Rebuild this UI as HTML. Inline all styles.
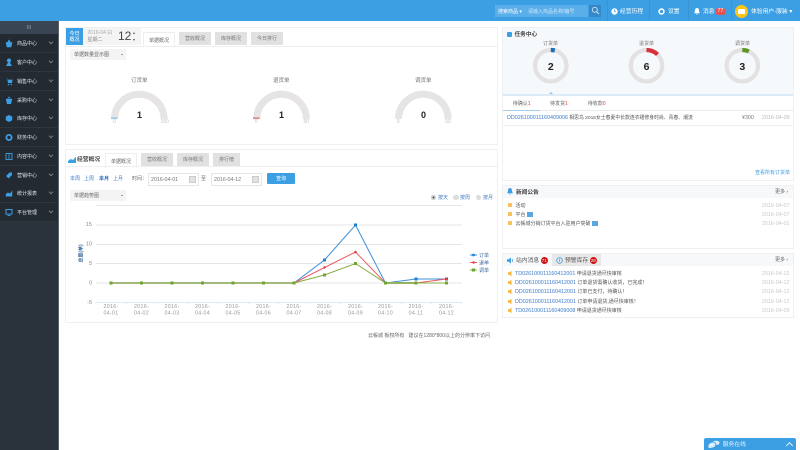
<!DOCTYPE html>
<html><head><meta charset="utf-8">
<style>
html,body{margin:0;padding:0;width:800px;height:450px;overflow:hidden;background:#fff}
body{font-family:"Liberation Sans","Noto Sans CJK SC",sans-serif;font-size:5px;color:#555;position:relative;filter:blur(.3px)}
.a{position:absolute;white-space:nowrap}
.panel{position:absolute;background:#fff;border:1px solid #eef0f2;box-sizing:border-box}
.side{position:absolute;left:0;top:21px;width:59px;height:429px;background:#2a323b;border-right:1px solid #59616a;box-sizing:border-box}
.mi{position:absolute;left:0;width:58px;height:19px;background:#232a31;border-bottom:1px solid #2d353e;box-sizing:border-box;color:#dfe3e8}
.mi span{position:absolute;left:17px;top:6px;font-size:5px;line-height:8px}
.mi svg{position:absolute;left:5px;top:5px}
.mi i{position:absolute;left:49px;top:6px;width:3px;height:3px;border-right:1px solid #8a929b;border-bottom:1px solid #8a929b;transform:rotate(45deg) scale(.8)}
.tab{position:absolute;height:13px;line-height:15px;text-align:center;background:#e1e1e1;color:#777;font-size:5px;width:32px}
.tab.on{background:#fff;border:1px solid #eceeef;border-bottom:0;height:15px;box-sizing:border-box;color:#666;line-height:16px}
.sel{position:absolute;background:#f4f4f4;height:11px;width:56px;line-height:12px;color:#666;padding-left:4px;box-sizing:border-box;font-size:5px}
.sel:after{content:"";position:absolute;right:3px;top:5px;border:1.2px solid transparent;border-top:1.6px solid #555}
.blue{color:#3d7cc9}.gr{color:#c4c4c4}.hd{font-weight:bold;color:#444}
.row{position:absolute;height:9px;line-height:9px;font-size:5px;color:#555;white-space:nowrap}
.row b{font-weight:normal;color:#3d7cc9;font-size:5.4px}
.row em{position:absolute;right:0;font-style:normal;color:#c8c8c8;font-size:5.4px}
.badge{display:inline-block;background:#cc1111;color:#fff;border-radius:50%;width:7px;height:7px;line-height:7px;text-align:center;font-size:4.5px;vertical-align:middle}
.c{text-align:center;width:16px;font-weight:bold;color:#222}
.pic{display:inline-block;width:6px;height:5px;background:#5aa7e0;vertical-align:middle;margin-left:1px}
</style></head><body>

<!-- top bar -->
<div class="a" style="left:0;top:0;width:800px;height:21px;background:#3d9fe3"></div>
<div class="a" style="left:495px;top:4.500px;width:93px;height:12.500px;background:#5aaeea"></div>
<div class="a" style="left:589px;top:4.500px;width:12px;height:12.500px;background:#3689c8"></div>
<div class="a" style="left:498px;top:7.500px;color:#fff;font-size:5px;line-height:8px">搜索商品 ▾</div>
<div class="a" style="left:528px;top:7.500px;color:#cfe6f8;font-size:5px;line-height:8px">请输入商品名称/编号</div>
<svg class="a" style="left:591px;top:6px" width="9" height="9" viewBox="0 0 9 9"><circle cx="3.800" cy="3.800" r="2.500" fill="none" stroke="#cfe6f8" stroke-width=".9"/><path d="M5.700 5.700L8 8" stroke="#cfe6f8" stroke-width="1"/></svg>
<div class="a" style="left:607px;top:0;width:1px;height:21px;background:#3a93d2"></div>
<div class="a" style="left:649px;top:0;width:1px;height:21px;background:#3a93d2"></div>
<div class="a" style="left:688px;top:0;width:1px;height:21px;background:#3a93d2"></div>
<div class="a" style="left:731px;top:0;width:1px;height:21px;background:#3a93d2"></div>
<svg class="a" style="left:611px;top:8px" width="7" height="7"><circle cx="3.500" cy="3.500" r="3.200" fill="#fff"/><path d="M3.500 1.500V3.500H5" stroke="#3d9fe3" stroke-width=".7" fill="none"/></svg>
<div class="a" style="left:620px;top:8px;color:#fff;font-size:5.800px;line-height:8px">经营历程</div>
<svg class="a" style="left:658px;top:8px" width="7" height="7"><circle cx="3.500" cy="3.500" r="2.400" fill="none" stroke="#fff" stroke-width="1.600"/></svg>
<div class="a" style="left:668px;top:8px;color:#fff;font-size:5.800px;line-height:8px">设置</div>
<svg class="a" style="left:694px;top:8px" width="6" height="7"><path d="M3 0C1.300 0 1 1.500 1 3L.2 5.300H5.800L5 3C5 1.500 4.700 0 3 0ZM2.200 5.800H3.800L3 7Z" fill="#fff"/></svg>
<div class="a" style="left:703px;top:8px;color:#fff;font-size:5.800px;line-height:8px">消息</div>
<div class="a" style="left:716px;top:8px;width:9px;height:7px;border-radius:2px;background:#e8524f;color:#fff;font-size:5.300px;line-height:7px;text-align:center">77</div>
<div class="a" style="left:735px;top:5px;width:13px;height:13px;border-radius:50%;background:#fbc717"></div>
<div class="a" style="left:738px;top:9px;width:7px;height:5px;background:#fff;border-radius:1px"></div>
<div class="a" style="left:751px;top:8px;color:#fff;font-size:5.800px;line-height:8px">体验用户-服装 ▾</div>

<!-- sidebar -->
<div class="side"></div>
<div class="a" style="left:0;top:21px;width:58px;height:12.500px;background:#3a4554;color:#9aa4b0;text-align:center;font-size:5px;line-height:14px">III</div>
<div class="mi" style="top:33.500px"><svg width="8" height="9"><path d="M1 3.500H7L6 8H2ZM2.500 3.500L4 1L5.500 3.500" fill="#3d9fe3" stroke="#3d9fe3" stroke-width=".6"/></svg><span>商品中心</span><i></i></div>
<div class="mi" style="top:53px"><svg width="8" height="9"><circle cx="4" cy="2.500" r="2" fill="#3d9fe3"/><path d="M1 8L3 4.500H5L7 8Z" fill="#3d9fe3"/></svg><span>客户中心</span><i></i></div>
<div class="mi" style="top:72px"><svg width="8" height="9"><path d="M1 1.500H2.200L3 6H7L7.600 2.600H2.500" fill="#3d9fe3"/><circle cx="3.500" cy="7.500" r=".8" fill="#3d9fe3"/><circle cx="6.200" cy="7.500" r=".8" fill="#3d9fe3"/></svg><span>销售中心</span><i></i></div>
<div class="mi" style="top:90.500px"><svg width="8" height="9"><path d="M.8 3H7.200L6 8H2Z" fill="#3d9fe3"/><path d="M2.500 3L4 1L5.500 3" stroke="#3d9fe3" fill="none" stroke-width=".7"/></svg><span>采购中心</span><i></i></div>
<div class="mi" style="top:109px"><svg width="8" height="9"><path d="M4 1L7.200 2.600V6.300L4 8L.8 6.300V2.600Z" fill="#3d9fe3"/></svg><span>库存中心</span><i></i></div>
<div class="mi" style="top:128px"><svg width="8" height="9"><circle cx="4" cy="4.500" r="2.600" fill="none" stroke="#3d9fe3" stroke-width="1.800"/></svg><span>财务中心</span><i></i></div>
<div class="mi" style="top:147px"><svg width="8" height="9"><rect x="1" y="1.500" width="6" height="6" fill="none" stroke="#3d9fe3" stroke-width=".9"/><path d="M4 1.500V7.500" stroke="#3d9fe3" stroke-width=".8"/></svg><span>内容中心</span><i></i></div>
<div class="mi" style="top:165.500px"><svg width="8" height="9"><path d="M1 5L4.500 1.500H7V4L3.500 7.500Z" fill="#3d9fe3"/></svg><span>营销中心</span><i></i></div>
<div class="mi" style="top:184px"><svg width="8" height="9"><path d="M.8 7.500V5L3 3.500L5 4.500L7.200 1.500V7.500Z" fill="#3d9fe3"/></svg><span>统计报表</span><i></i></div>
<div class="mi" style="top:203px"><svg width="8" height="9"><rect x="1" y="1.500" width="6" height="4.600" fill="none" stroke="#3d9fe3" stroke-width="1"/><path d="M2.500 7.500H5.500" stroke="#3d9fe3" stroke-width=".9"/></svg><span>平台管理</span><i></i></div>

<!-- panel 1 -->
<div class="panel" style="left:65px;top:27px;width:433px;height:118px"></div>
<div class="a" style="left:66px;top:28px;width:17px;height:17px;background:#3d9fe3;color:#fff;font-size:5px;line-height:6.500px;text-align:center;padding-top:2.500px;box-sizing:border-box;white-space:normal">今日<br>概况</div>
<div class="a" style="left:83px;top:28px;width:58px;height:17px;background:#f4f4f4"></div>
<div class="a" style="left:87.500px;top:29.500px;font-size:5px;line-height:7px;color:#aaa">2016-04 曰</div>
<div class="a" style="left:87.500px;top:36.500px;font-size:5px;line-height:7px;color:#888">星期二</div>
<div class="a" style="left:118px;top:28.500px;font-size:12px;line-height:15px;color:#444">12</div>
<div class="a" style="left:133px;top:32px;border:1.500px solid transparent;border-bottom:2px solid #555;border-top:0"></div>
<div class="a" style="left:133px;top:39px;border:1.500px solid transparent;border-top:2px solid #555;border-bottom:0"></div>
<div class="tab on" style="left:143px;top:32px">单据概况</div>
<div class="tab" style="left:179px;top:32px">营收概况</div>
<div class="tab" style="left:215px;top:32px">库存概况</div>
<div class="tab" style="left:251px;top:32px">今日排行</div>
<div class="a" style="left:65px;top:46px;width:433px;height:1px;background:#eceeef"></div>
<div class="sel" style="left:70px;top:48.500px">单据数量显示图</div>

<div class="a" style="left:131px;top:76.500px;color:#777;font-size:5.500px;line-height:8px">订货单</div>
<div class="a" style="left:273px;top:76.500px;color:#777;font-size:5.500px;line-height:8px">退货单</div>
<div class="a" style="left:415px;top:76.500px;color:#777;font-size:5.500px;line-height:8px">调货单</div>
<svg class="a" style="left:100px;top:85px" width="380" height="45" viewBox="0 0 380 45">
<g fill="none" stroke="#e6e4e5" stroke-width="7">
<path d="M14.500 34A24.800 24.800 0 0 1 64.100 34"/><path d="M156.700 34A24.800 24.800 0 0 1 206.300 34"/><path d="M298.500 34A24.800 24.800 0 0 1 348.100 34"/>
</g>
<rect x="11" y="32.300" width="6.500" height="1.800" fill="#9fcbe8"/>
<rect x="153" y="32.300" width="6.500" height="1.800" fill="#e08a90"/>
</svg>
<div class="a c" style="left:131.500px;top:109.500px;font-size:9px;line-height:10px">1</div>
<div class="a c" style="left:273.500px;top:109.500px;font-size:9px;line-height:10px">1</div>
<div class="a c" style="left:415.500px;top:109.500px;font-size:9px;line-height:10px">0</div>
<div class="a gr" style="left:113px;top:119px;font-size:5px;line-height:7px">0</div>
<div class="a gr" style="left:160.500px;top:119px;font-size:5px;line-height:7px">100</div>
<div class="a gr" style="left:254.700px;top:119px;font-size:5px;line-height:7px">0</div>
<div class="a gr" style="left:303.500px;top:119px;font-size:5px;line-height:7px">50</div>
<div class="a gr" style="left:396.700px;top:119px;font-size:5px;line-height:7px">0</div>
<div class="a gr" style="left:445.200px;top:119px;font-size:5px;line-height:7px">50</div>

<!-- panel 2 -->
<div class="panel" style="left:65px;top:148.500px;width:433px;height:174px"></div>
<svg class="a" style="left:68px;top:156px" width="8" height="7"><path d="M0 7V5L2.500 3L5 4L8 .5V7Z" fill="#3d9fe3"/></svg>
<div class="a hd" style="left:77px;top:156px;font-size:5.800px;line-height:9px">经营概况</div>
<div class="tab on" style="left:105px;top:153px">单据概况</div>
<div class="tab" style="left:141px;top:153px">营收概况</div>
<div class="tab" style="left:177px;top:153px">库存概况</div>
<div class="tab" style="left:213px;top:153px;width:27px">排行榜</div>
<div class="a" style="left:65px;top:166px;width:433px;height:1px;background:#eceeef"></div>
<div class="a blue" style="left:70px;top:175px;line-height:8px">本周</div>
<div class="a blue" style="left:84px;top:175px;line-height:8px">上周</div>
<div class="a" style="left:99px;top:175px;line-height:8px;color:#2a6cbf;font-weight:bold">本月</div>
<div class="a blue" style="left:113px;top:175px;line-height:8px">上月</div>
<div class="a" style="left:132px;top:175px;line-height:8px;color:#666">时间：</div>
<div class="a" style="left:148px;top:172.500px;width:50.500px;height:13px;border:1px solid #e6e6e6;box-sizing:border-box;line-height:12px;padding-left:2px;color:#777;font-size:5.300px">2016-04-01</div>
<div class="a" style="left:201px;top:175px;line-height:8px;color:#666">至</div>
<div class="a" style="left:211px;top:172.500px;width:50.500px;height:13px;border:1px solid #e6e6e6;box-sizing:border-box;line-height:12px;padding-left:2px;color:#777;font-size:5.300px">2016-04-12</div>
<div class="a" style="left:189px;top:175.500px;width:7px;height:7px;background:#dfe3e3;border:.5px solid #c8cccc;box-sizing:border-box"></div>
<div class="a" style="left:252px;top:175.500px;width:7px;height:7px;background:#dfe3e3;border:.5px solid #c8cccc;box-sizing:border-box"></div>
<div class="a" style="left:267px;top:172.800px;width:28px;height:11.700px;background:#3d9fe3;color:#fff;text-align:center;line-height:12px;border-radius:1px">查询</div>
<div class="sel" style="left:70px;top:190px">单据趋势图</div>

<div class="a" style="left:430.500px;top:194.500px;width:5.500px;height:5.500px;border-radius:50%;background:#ddd;box-shadow:inset 0 0 0 1.500px #ddd,inset 0 0 0 3px #444"></div>
<div class="a blue" style="left:438px;top:194.500px;line-height:7px">按天</div>
<div class="a" style="left:453px;top:194.500px;width:5.500px;height:5.500px;border-radius:50%;background:#ddd"></div>
<div class="a blue" style="left:460px;top:194.500px;line-height:7px">按周</div>
<div class="a" style="left:475.500px;top:194.500px;width:5.500px;height:5.500px;border-radius:50%;background:#ddd"></div>
<div class="a blue" style="left:483px;top:194.500px;line-height:7px">按月</div>

<svg class="a" style="left:60px;top:200px;overflow:visible" width="440" height="120" viewBox="60 200 440 120">
<g stroke="#e6e6e6" stroke-width="1">
<path d="M96 205.500H462M96 225H462M96 244.500H462M96 263.500H462M96 283H462"/>
</g>
<path d="M96 302.500H462" stroke="#d5e2f0" stroke-width=".8"/>
<g stroke="#d5e2f0" stroke-width=".6"><path d="M96 302.500v2M126.500 302.500v2M157 302.500v2M187.500 302.500v2M218 302.500v2M248.500 302.500v2M279 302.500v2M309.500 302.500v2M340 302.500v2M370.500 302.500v2M401 302.500v2M431.500 302.500v2M462 302.500v2"/></g>
<polyline fill="none" stroke="#3d8fd8" stroke-width="1" points="294,283 324.500,260 355.500,225 385.500,283 416,279 446.500,279"/>
<polyline fill="none" stroke="#ee5a66" stroke-width="1" points="294,283 324.500,267.500 355.500,252 385.500,283 416,283 446.500,279"/>
<path d="M111 283H294M385.500 283H416" fill="none" stroke="#a5b87c" stroke-width="2"/>
<polyline fill="none" stroke="#86ad44" stroke-width="1" points="294,283 324.500,275 355.500,263.500 385.500,283 416,283 446.500,283"/>
<g fill="#1f7fd0"><rect x="323" y="258.500" width="3" height="3"/><rect x="354" y="223.500" width="3" height="3"/><rect x="414.500" y="277.500" width="3" height="3"/><rect x="445" y="277.500" width="3" height="3"/></g>
<g fill="#e03b4a"><circle cx="324.500" cy="267.500" r="1.200"/><circle cx="355.500" cy="252" r="1.300"/><circle cx="446.500" cy="279" r="1.200"/></g>
<g fill="#6fa52c"><rect x="109.500" y="281.500" width="3" height="3"/><rect x="140" y="281.500" width="3" height="3"/><rect x="170.500" y="281.500" width="3" height="3"/><rect x="201" y="281.500" width="3" height="3"/><rect x="231.500" y="281.500" width="3" height="3"/><rect x="262" y="281.500" width="3" height="3"/><rect x="292.500" y="281.500" width="3" height="3"/><rect x="323" y="273.500" width="3" height="3"/><rect x="354" y="262" width="3" height="3"/><rect x="384" y="281.500" width="3" height="3"/><rect x="414.500" y="281.500" width="3" height="3"/><rect x="445" y="281.500" width="3" height="3"/></g>
<g fill="#888" font-size="5.500" text-anchor="end" font-family="Liberation Sans">
<text x="92" y="226">15</text><text x="92" y="245.500">10</text><text x="92" y="265">5</text><text x="92" y="284.500">0</text><text x="92" y="304">-5</text>
</g>
<text transform="translate(82.500,253.500) rotate(-90)" fill="#3f6a9c" font-size="5" font-weight="bold" font-family="Liberation Sans,Noto Sans CJK SC" text-anchor="middle">总量(单)</text>
<g fill="#999" font-size="5.300" text-anchor="middle" font-family="Liberation Sans" letter-spacing=".3">
<text x="111" y="308">2016-</text><text x="111" y="314.500">04-01</text>
<text x="141.500" y="308">2016-</text><text x="141.500" y="314.500">04-02</text>
<text x="172" y="308">2016-</text><text x="172" y="314.500">04-03</text>
<text x="202.500" y="308">2016-</text><text x="202.500" y="314.500">04-04</text>
<text x="233" y="308">2016-</text><text x="233" y="314.500">04-05</text>
<text x="263.500" y="308">2016-</text><text x="263.500" y="314.500">04-06</text>
<text x="294" y="308">2016-</text><text x="294" y="314.500">04-07</text>
<text x="324.500" y="308">2016-</text><text x="324.500" y="314.500">04-08</text>
<text x="355.500" y="308">2016-</text><text x="355.500" y="314.500">04-09</text>
<text x="385.500" y="308">2016-</text><text x="385.500" y="314.500">04-10</text>
<text x="416" y="308">2016-</text><text x="416" y="314.500">04-11</text>
<text x="446.500" y="308">2016-</text><text x="446.500" y="314.500">04-12</text>
</g>
<path d="M470 255H477" stroke="#3d8fd8" stroke-width="1"/><circle cx="473.500" cy="255" r="1.400" fill="#1f7fd0"/>
<path d="M470 262.500H477" stroke="#ee5a66" stroke-width="1"/><circle cx="473.500" cy="262.500" r="1.200" fill="#e03b4a"/>
<path d="M470 270H477" stroke="#86ad44" stroke-width="1"/><rect x="472" y="268.500" width="3" height="3" fill="#6fa52c"/>
<g fill="#3f6a9c" font-size="5" font-family="Liberation Sans,Noto Sans CJK SC"><text x="479" y="257">订单</text><text x="479" y="264.500">退单</text><text x="479" y="272">调单</text></g>
</svg>

<div class="a" style="left:368px;top:332px;font-size:5px;line-height:9px;color:#666">云帳城 板权所有&nbsp;&nbsp;&nbsp;建议在1280*800以上的分辨率下访问</div>

<!-- task center -->
<div class="panel" style="left:502px;top:27px;width:292px;height:153.500px"></div>
<div class="a" style="left:503px;top:28px;width:290px;height:67px;background:#f6f9fc"></div>
<div class="a" style="left:503px;top:94px;width:290px;height:2px;background:#dcebf6"></div>
<div class="a" style="left:548.500px;top:92px;border:2.500px solid transparent;border-bottom:2.500px solid #8fc3e8;border-top:0"></div>
<div class="a" style="left:507px;top:31.500px;width:5px;height:5px;background:#3d9fe3;border-radius:1px"></div>
<div class="a hd" style="left:514.500px;top:30.500px;font-size:5.700px;line-height:8px">任务中心</div>
<div class="a" style="left:543px;top:40.500px;font-size:5px;line-height:7px;color:#777">订货单</div>
<div class="a" style="left:639px;top:40.500px;font-size:5px;line-height:7px;color:#777">退货单</div>
<div class="a" style="left:735px;top:40.500px;font-size:5px;line-height:7px;color:#777">调货单</div>
<svg class="a" style="left:530px;top:45px" width="240" height="40" viewBox="0 0 240 40">
<g fill="none" stroke="#e3e1e1" stroke-width="4.300">
<circle cx="20.800" cy="20.700" r="15.700"/><circle cx="116.500" cy="20.700" r="15.700"/><circle cx="212.300" cy="20.700" r="15.700"/>
</g>
<path d="M20.800 5A15.700 15.700 0 0 1 24.800 5.500" fill="none" stroke="#1a6cb8" stroke-width="4.300"/>
<path d="M116.500 5A15.700 15.700 0 0 1 127.500 9.500" fill="none" stroke="#d92f3c" stroke-width="4.300"/>
<path d="M212.300 5A15.700 15.700 0 0 1 218.800 6.400" fill="none" stroke="#5f9424" stroke-width="4.300"/>
</svg>
<div class="a c" style="left:542.800px;top:60.500px;font-size:10.500px;line-height:12px">2</div>
<div class="a c" style="left:638.500px;top:60.500px;font-size:10.500px;line-height:12px">6</div>
<div class="a c" style="left:734.300px;top:60.500px;font-size:10.500px;line-height:12px">3</div>

<div class="a" style="left:512.700px;top:100px;font-size:5px;line-height:9px;color:#666">待确认<span style="color:#e33">1</span></div>
<div class="a" style="left:550px;top:100px;font-size:5px;line-height:9px;color:#666">待发货<span style="color:#e33">1</span></div>
<div class="a" style="left:587.700px;top:100px;font-size:5px;line-height:9px;color:#666">待收款<span style="color:#e33">0</span></div>
<div class="a" style="left:503px;top:110px;width:290px;height:1px;background:#e8eaec"></div>
<div class="a" style="left:503px;top:109.500px;width:37px;height:1.500px;background:#a5cfee"></div>
<div class="a" style="left:507px;top:114px;font-size:4.850px;line-height:9px;color:#555"><span class="blue" style="font-size:5.400px">DD026100011160409006</span> 相思鸟 2016女士春夏中长款连衣裙修身时尚、青春、潮流</div>
<div class="a" style="left:742px;top:114px;font-size:5.300px;line-height:9px;color:#777">¥300</div>
<div class="a" style="left:762px;top:114px;font-size:5.400px;line-height:9px;color:#bbb">2016-04-09</div>
<div class="a" style="left:503px;top:125px;width:290px;height:1px;background:#f0f0f0"></div>
<div class="a" style="left:755px;top:169px;font-size:5px;line-height:9px;color:#3d9fe3">查看所有订货单</div>

<!-- news -->
<div class="panel" style="left:502px;top:185px;width:292px;height:63.500px"></div>
<div class="a" style="left:503px;top:186px;width:290px;height:12px;background:#f6f8fa"></div>
<svg class="a" style="left:507px;top:188px" width="6" height="7"><path d="M3 0C1.300 0 1 1.500 1 3L.2 5.300H5.800L5 3C5 1.500 4.700 0 3 0ZM2.200 5.800H3.800L3 7Z" fill="#3d9fe3"/></svg>
<div class="a hd" style="left:516px;top:188.500px;font-size:5.700px;line-height:8px">新闻公告</div>
<div class="a" style="left:775px;top:189px;font-size:5px;line-height:7px;color:#666">更多 ›</div>
<div class="a" style="left:508px;top:203px;width:4px;height:4px;background:#f8c25c"></div>
<div class="a" style="left:508px;top:212px;width:4px;height:4px;background:#f8c25c"></div>
<div class="a" style="left:508px;top:221px;width:4px;height:4px;background:#f8c25c"></div>
<div class="row" style="left:515.500px;width:274px;top:202px">活动<em>2016-04-07</em></div>
<div class="row" style="left:515.500px;width:274px;top:211px">平台<span class="pic"></span><em>2016-04-07</em></div>
<div class="row" style="left:515.500px;width:274px;top:220px">云帳城分销订货平台入驻用户突破<span class="pic"></span><em>2016-04-01</em></div>

<!-- messages -->
<div class="panel" style="left:502px;top:253px;width:292px;height:64.500px"></div>
<div class="a" style="left:503px;top:254px;width:290px;height:12px;background:#f6f8fa"></div>
<div class="a" style="left:552px;top:254px;width:49px;height:12px;background:#e8e8e8"></div>
<svg class="a" style="left:507px;top:256.500px" width="7" height="7"><path d="M0 2.300H1.800L4 .5V6.500L1.800 4.700H0Z" fill="#3d9fe3"/><path d="M5 2C5.800 2.800 5.800 4.200 5 5" stroke="#3d9fe3" stroke-width=".7" fill="none"/></svg>
<div class="a" style="left:516px;top:256.500px;font-size:5.800px;line-height:8px;color:#555">站内消息 <span class="badge">71</span></div>
<svg class="a" style="left:556px;top:257px" width="7" height="7"><circle cx="3.500" cy="3.500" r="2.800" fill="none" stroke="#3d9fe3" stroke-width=".8"/><path d="M3.500 2V4.800" stroke="#3d9fe3" stroke-width=".7"/></svg>
<div class="a" style="left:565px;top:256.500px;font-size:5.800px;line-height:8px;color:#555">预警库存 <span class="badge">28</span></div>
<div class="a" style="left:775px;top:257px;font-size:5px;line-height:7px;color:#666">更多 ›</div>
<div class="row" style="left:515px;width:274.500px;top:270px"><b>TD026100011160412001</b> 申请退货通尽快审核<em>2016-04-12</em></div>
<div class="row" style="left:515px;width:274.500px;top:279px"><b>DD026100011160412001</b> 订单退货需确认收货，已完成！<em>2016-04-12</em></div>
<div class="row" style="left:515px;width:274.500px;top:288px"><b>DD026100011160412001</b> 订单已支付，待确认！<em>2016-04-12</em></div>
<div class="row" style="left:515px;width:274.500px;top:298px"><b>DD026100011160412001</b> 订单申请退货,通尽快审核！<em>2016-04-12</em></div>
<div class="row" style="left:515px;width:274.500px;top:307px"><b>TD026100011160409008</b> 申请退货通尽快审核<em>2016-04-09</em></div>
<svg class="a" style="left:507.500px;top:270px" width="6" height="46" fill="#f8b33c"><path d="M0 2.300H1.500L3.500 .8V6.200L1.500 4.700H0Z"/><path d="M0 11.300H1.500L3.500 9.800V15.200L1.500 13.700H0Z"/><path d="M0 20.300H1.500L3.500 18.800V24.200L1.500 22.700H0Z"/><path d="M0 30.300H1.500L3.500 28.800V34.200L1.500 32.700H0Z"/><path d="M0 39.300H1.500L3.500 37.800V43.200L1.500 41.700H0Z"/></svg>

<!-- service -->
<div class="a" style="left:704px;top:438px;width:92px;height:12px;background:#3d9fe3;border-radius:2px 2px 0 0"></div>
<svg class="a" style="left:708px;top:440px" width="12" height="9"><path d="M.5 6C.5 3.500 3 2.500 5 2.500C7 2.500 8 4 7 6C6 7.500 3 8 .5 8Z" fill="#dbeefb"/><path d="M5 1.500C7 .3 11 .5 11.500 2.500C11.500 4 10 5 8.500 5C8.500 3 7 2 5 1.500Z" fill="#dbeefb"/></svg>
<div class="a" style="left:722.700px;top:441px;color:#e3f2fc;font-size:5.800px;line-height:9px">服务在线</div>
<div class="a" style="left:786.500px;top:443px;width:4px;height:4px;border-left:1px solid #e3f2fc;border-top:1px solid #e3f2fc;transform:rotate(45deg)"></div>
</body></html>
